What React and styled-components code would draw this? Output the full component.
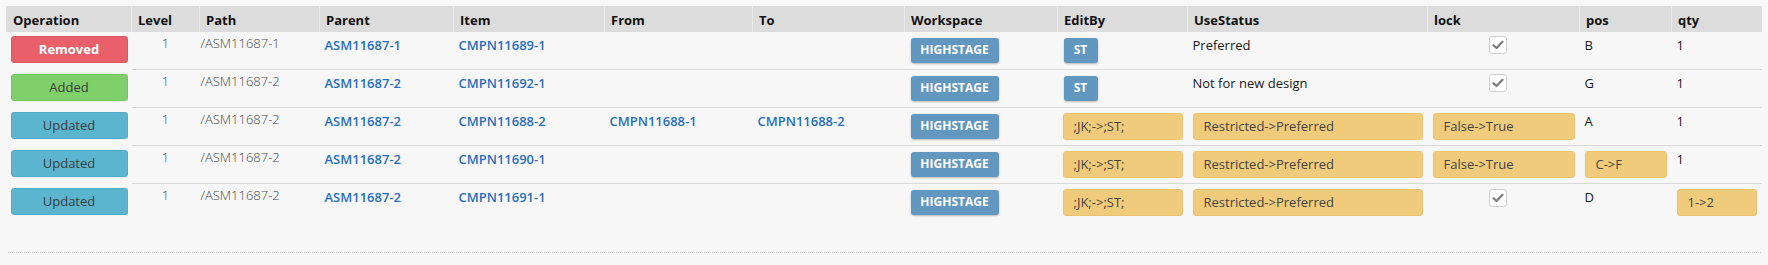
import React from "react";
import styled, { createGlobalStyle } from "styled-components";

const GlobalStyle = createGlobalStyle`
  html, body { margin: 0; padding: 0; background: #f7f7f7; }
  body { font-family: "Open Sans", "Noto Sans", sans-serif; font-size: 13px; color: #222; }
`;

const Page = styled.div`
  padding: 6px 7px 0 6px;
  height: 265px;
  box-sizing: border-box;
`;

const Table = styled.table`
  width: 1755px;
  border-collapse: collapse;
  table-layout: fixed;
`;

const Th = styled.th`
  background: #dcdcdc;
  height: 25px;
  padding: 0 6px;
  text-align: left;
  font-weight: 700;
  font-size: 13px;
  color: #111;
  border-left: 1px solid ${(p) => (p.$first ? "#dcdcdc" : "#ebebeb")};
  vertical-align: bottom;
  line-height: 20px;
  padding-bottom: 1px;
  box-sizing: border-box;
`;

const Td = styled.td`
  vertical-align: top;
  height: 34px;
  padding: 3px 5px 0 5px;
  border-top: 1px solid
    ${(p) => (p.$first ? "#dcdcdc" : p.$noLine ? "transparent" : "#d9d9d9")};
  line-height: 20px;
`;

const OpButton = styled.div`
  width: 117px;
  height: 27px;
  margin-left: -1px;
  margin-top: 1px;
  box-sizing: border-box;
  border-radius: 3px;
  display: flex;
  align-items: center;
  justify-content: center;
  font-size: 13px;
  background: ${(p) => p.$bg};
  border: 1px solid ${(p) => p.$border};
  color: ${(p) => p.$color};
  font-weight: ${(p) => (p.$bold ? 700 : 400)};
`;

const Light = styled.div`
  color: #4a4a4a;
  font-size: 13px;
  font-weight: 300;
  margin-top: -2px;
  text-align: ${(p) => p.$align || "left"};
  margin-left: ${(p) => p.$shift || 0}px;
`;

const Link = styled.a`
  color: #2a6fbd;
  font-weight: 600;
  text-decoration: none;
  cursor: pointer;
`;

const Plain = styled.div`
  color: #1a1a1a;
  font-size: 13px;
`;

const Badge = styled.div`
  display: flex;
  align-items: center;
  justify-content: center;
  width: ${(p) => p.$w}px;
  height: 25px;
  margin-top: 3px;
  margin-left: 1px;
  box-sizing: border-box;
  background: #6297bf;
  color: #fff;
  font-weight: 700;
  font-size: 12px;
  border-radius: 3px;
  box-shadow: 0 1px 2px rgba(0, 0, 0, 0.25);
`;

const Change = styled.div`
  height: 27px;
  margin-top: 2px;
  box-sizing: border-box;
  background: #f1cb7c;
  border: 1px solid #ebc272;
  border-radius: 3px;
  color: #444;
  font-size: 13px;
  padding-left: 10px;
  display: flex;
  align-items: center;
  white-space: nowrap;
`;

const CheckBox = styled.div`
  display: flex;
  align-items: center;
  justify-content: center;
  width: 18px;
  height: 18px;
  box-sizing: border-box;
  margin-left: 56px;
  margin-top: ${(p) => p.$mt || 1}px;
  background: #fff;
  border: 1px solid #cfcfcf;
  border-radius: 3px;
`;

const Footer = styled.div`
  margin-top: 31px;
  margin-left: 2px;
  border-top: 1px dotted #cfcfcf;
`;

const OPS = {
  Removed: { bg: "#e9606a", border: "#dc5660", color: "#fff", bold: true },
  Added: { bg: "#7fd06b", border: "#74c561", color: "#3b3b3b" },
  Updated: { bg: "#5bb5cf", border: "#51abc6", color: "#3b3b3b" },
};

const cols = [
  ["Operation", 125],
  ["Level", 68],
  ["Path", 120],
  ["Parent", 134],
  ["Item", 151],
  ["From", 148],
  ["To", 152],
  ["Workspace", 153],
  ["EditBy", 130],
  ["UseStatus", 240],
  ["lock", 152],
  ["pos", 92],
  ["qty", 90],
];

const rows = [
  { op: "Removed", path: "/ASM11687-1", parent: "ASM11687-1", item: "CMPN11689-1", editBy: { badge: "ST" }, use: { text: "Preferred" }, lock: { check: true }, pos: { text: "B" }, qty: { text: "1" } },
  { op: "Added", path: "/ASM11687-2", parent: "ASM11687-2", item: "CMPN11692-1", editBy: { badge: "ST" }, use: { text: "Not for new design" }, lock: { check: true }, pos: { text: "G" }, qty: { text: "1" } },
  { op: "Updated", path: "/ASM11687-2", parent: "ASM11687-2", item: "CMPN11688-2", from: "CMPN11688-1", to: "CMPN11688-2", editBy: { change: ";JK;->;ST;" }, use: { change: "Restricted->Preferred" }, lock: { change: "False->True" }, pos: { text: "A" }, qty: { text: "1" } },
  { op: "Updated", path: "/ASM11687-2", parent: "ASM11687-2", item: "CMPN11690-1", editBy: { change: ";JK;->;ST;" }, use: { change: "Restricted->Preferred" }, lock: { change: "False->True" }, pos: { change: "C->F" }, qty: { text: "1" } },
  { op: "Updated", path: "/ASM11687-2", parent: "ASM11687-2", item: "CMPN11691-1", editBy: { change: ";JK;->;ST;" }, use: { change: "Restricted->Preferred" }, lock: { check: true, mt: 2 }, pos: { text: "D" }, qty: { change: "1->2" } },
];

const Check = ({ mt }) => (
  <CheckBox $mt={mt}>
    <svg width="12" height="10" viewBox="0 0 12 10">
      <path d="M1.5 5.2 L4.5 8 L10.5 1.8" fill="none" stroke="#7a7a7a" strokeWidth="2.2" strokeLinecap="round" strokeLinejoin="round" />
    </svg>
  </CheckBox>
);

const Value = ({ v }) => {
  if (!v) return null;
  if (v.change) return <Change>{v.change}</Change>;
  if (v.check) return <Check mt={v.mt} />;
  if (v.badge) return <Badge $w={34}>{v.badge}</Badge>;
  return <Plain>{v.text}</Plain>;
};

export default function App() {
  return (
    <>
      <GlobalStyle />
      <Page>
        <Table>
          <colgroup>
            {cols.map(([n, w]) => (
              <col key={n} style={{ width: w }} />
            ))}
          </colgroup>
          <thead>
            <tr>
              {cols.map(([n], i) => (
                <Th key={n} $first={i === 0}>{n}</Th>
              ))}
            </tr>
          </thead>
          <tbody>
            {rows.map((r, i) => {
              const first = i === 0;
              const o = OPS[r.op];
              return (
                <tr key={i}>
                  <Td $first={first} $noLine>
                    <OpButton $bg={o.bg} $border={o.border} $color={o.color} $bold={o.bold}>{r.op}</OpButton>
                  </Td>
                  <Td $first={first}><Light $align="center">1</Light></Td>
                  <Td $first={first}><Light $shift={-4}>{r.path}</Light></Td>
                  <Td $first={first}><Link>{r.parent}</Link></Td>
                  <Td $first={first}><Link>{r.item}</Link></Td>
                  <Td $first={first}>{r.from && <Link>{r.from}</Link>}</Td>
                  <Td $first={first}>{r.to && <Link>{r.to}</Link>}</Td>
                  <Td $first={first}><Badge $w={88}>HIGHSTAGE</Badge></Td>
                  <Td $first={first}><Value v={r.editBy} /></Td>
                  <Td $first={first}><Value v={r.use} /></Td>
                  <Td $first={first}><Value v={r.lock} /></Td>
                  <Td $first={first}><Value v={r.pos} /></Td>
                  <Td $first={first}><Value v={r.qty} /></Td>
                </tr>
              );
            })}
          </tbody>
        </Table>
        <Footer />
      </Page>
    </>
  );
}
